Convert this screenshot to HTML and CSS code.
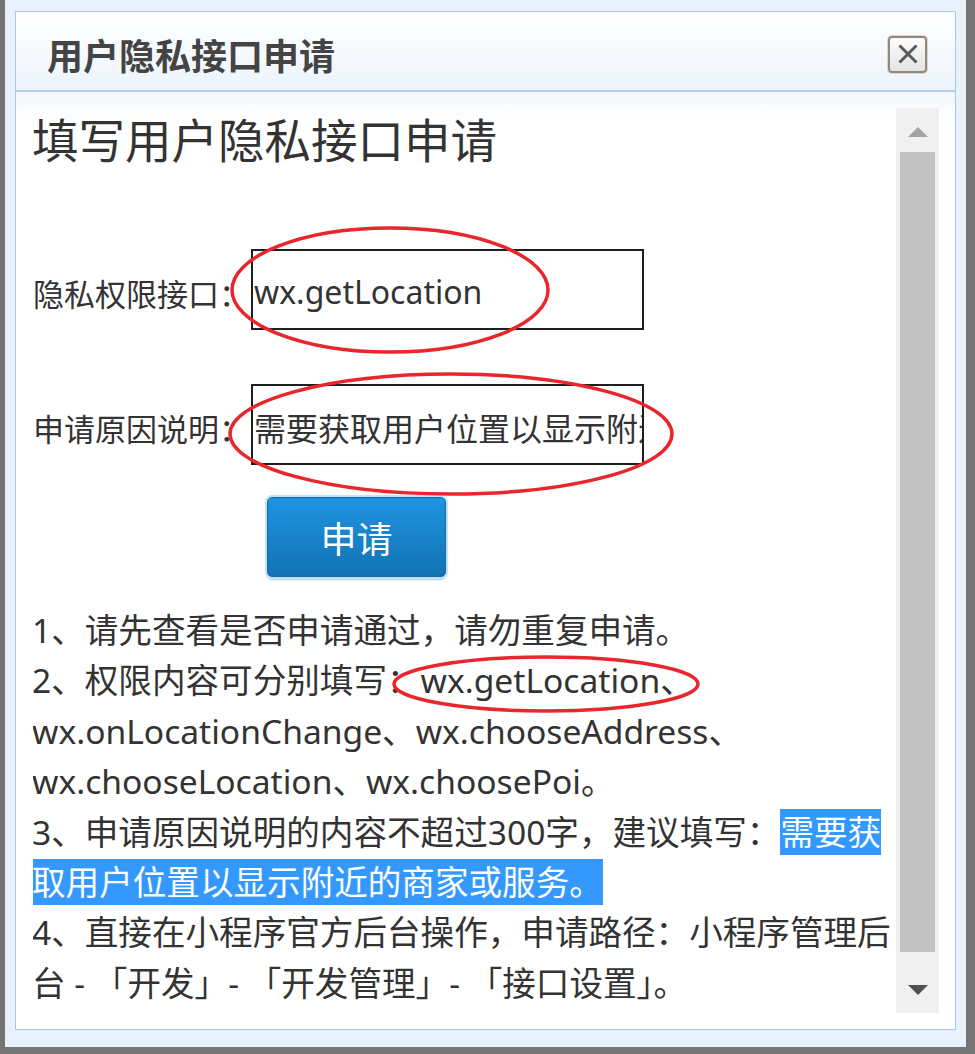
FILE: index.html
```html
<!DOCTYPE html>
<html lang="zh-CN">
<head>
  <meta charset="UTF-8" />
  <meta name="viewport" content="width=device-width, initial-scale=1.0"/>
  <title>用户隐私接口申请</title>
  <link rel="stylesheet" href="styles.css">
</head>
<body>

  <div class="window">
    <div class="dialog">
      <div class="dialog-title">
        <span class="title-text">用户隐私接口申请</span>
        <button class="close-btn" title="关闭">
          <svg width="22" height="22" viewBox="0 0 22 22">
            <path d="M2.5 2.5 L19.5 19.5 M19.5 2.5 L2.5 19.5" stroke="#5a5a5a" stroke-width="3" fill="none"/>
          </svg>
        </button>
      </div>

      <div class="dialog-body">
        <div class="content">
          <div class="heading">填写用户隐私接口申请</div>

          <div class="form-row">
            <label class="form-label" for="apiName">隐私权限接口：</label>
            <input class="form-input" id="apiName" type="text" value="wx.getLocation">
          </div>

          <div class="form-row">
            <label class="form-label" for="reason">申请原因说明：</label>
            <input class="form-input" id="reason" type="text" value="需要获取用户位置以显示附近的商家或服务。">
          </div>

          <button class="apply-btn">申请</button>

          <div class="notes">
            <p>1、请先查看是否申请通过，请勿重复申请。</p>
            <p>2、权限内容可分别填写：wx.getLocation、wx.onLocationChange、wx.chooseAddress、wx.chooseLocation、wx.choosePoi。</p>
            <p>3、申请原因说明的内容不超过300字，建议填写：<span class="hl">需要获取用户位置以显示附近的商家或服务。</span></p>
            <p>4、直接在小程序官方后台操作，申请路径：小程序管理后台 - 「开发」- 「开发管理」- 「接口设置」。</p>
          </div>
        </div>

        <div class="scrollbar">
          <div class="scroll-up"><span class="arrow-up"></span></div>
          <div class="scroll-thumb"></div>
          <div class="scroll-down"><span class="arrow-down"></span></div>
        </div>
      </div>
    </div>
  </div>

  <!-- red marks drawn over the screenshot -->
  <svg class="marks" width="975" height="1054" viewBox="0 0 975 1054">
    <ellipse cx="390" cy="290" rx="158" ry="62" />
    <ellipse cx="451" cy="434" rx="221" ry="60" />
    <ellipse cx="546" cy="684" rx="152" ry="27" />
  </svg>

</body>
</html>
```

FILE: styles.css
```css
* {
  box-sizing: border-box;
}

body {
  margin: 0;
  width: 975px;
  height: 1054px;
  background: #747474;
  font-family: "Noto Sans", "Noto Sans CJK SC", sans-serif;
  color: #333;
  position: relative;
  overflow: hidden;
}

.window {
  margin-left: 5px;
  width: 961px;
  height: 1047px;
  background: #e8f2fc;
  padding: 11px 10px 0 10px;
}

.dialog {
  height: 1019px;
  border: 1px solid #a7c7e4;
  background: #fff;
  display: flex;
  flex-direction: column;
}

.dialog-title {
  height: 80px;
  border-bottom: 2px solid #b5d1ea;
  background: linear-gradient(#ffffff, #edf4fc);
  display: flex;
  align-items: center;
  justify-content: space-between;
  padding: 0 28px 0 31px;
}

.title-text {
  margin-top: 12px;
  font-size: 36px;
  line-height: 40px;
  font-weight: bold;
  color: #444;
}

.close-btn {
  margin-top: 6px;
  width: 39px;
  height: 37px;
  padding: 0;
  border: 2px solid #8a8a8a;
  border-radius: 4px;
  background: linear-gradient(#fdfdfd, #e4e4e4);
  box-shadow: 0 0 0 1px #ead3b9;
  display: flex;
  align-items: center;
  justify-content: center;
  cursor: pointer;
}

.dialog-body {
  flex: 1;
  display: flex;
  padding: 16px 16px 16px 17px;
  background: linear-gradient(#f3f7fc, #ffffff 30px);
}

.content {
  flex: 1;
  overflow: hidden;
}

.heading {
  margin-top: 2px;
  margin-left: -1px;
  font-size: 46.5px;
  line-height: 60px;
}

.form-row {
  display: flex;
  align-items: center;
  margin-top: 79px;
}

.form-row + .form-row {
  margin-top: 54px;
}

.form-label {
  width: 218px;
  padding-top: 6px;
  font-size: 31px;
  white-space: nowrap;
}

.form-input {
  width: 393px;
  height: 81px;
  border: 2px solid #1f1f1f;
  padding: 4px 0 0 1px;
  font-family: inherit;
  font-size: 32px;
  color: #333;
  background: #fff;
  outline: none;
}

.apply-btn {
  display: block;
  margin: 32px 0 0 234px;
  width: 179px;
  height: 80px;
  border: 1px solid #0e6cab;
  border-radius: 5px;
  background: linear-gradient(#1f94e1, #1273b4);
  box-shadow: 0 0 0 2px #c5e2f8, 0 3px 2px #a9d3f3;
  color: #fff;
  font-family: inherit;
  font-size: 36px;
  cursor: pointer;
}

.notes {
  margin-top: 28px;
  margin-left: -1px;
  font-size: 33.6px;
  line-height: 50.4px;
}

.notes p {
  margin: 0;
}

.hl {
  background: #3399ff;
  color: #fff;
}

.scrollbar {
  width: 43px;
  background: #f0f0f0;
  display: flex;
  flex-direction: column;
}

.scroll-up {
  height: 44px;
  padding-top: 4px;
  display: flex;
  align-items: center;
  justify-content: center;
}

.arrow-up {
  border-left: 10px solid transparent;
  border-right: 10px solid transparent;
  border-bottom: 10px solid #a3a3a3;
}

.scroll-thumb {
  height: 800px;
  margin: 0 4px;
  background: #c1c1c1;
}

.scroll-down {
  flex: 1;
  padding-bottom: 18px;
  display: flex;
  align-items: flex-end;
  justify-content: center;
}

.arrow-down {
  border-left: 10px solid transparent;
  border-right: 10px solid transparent;
  border-top: 10px solid #505050;
}

.marks {
  position: absolute;
  left: 0;
  top: 0;
  pointer-events: none;
}

.marks ellipse {
  fill: none;
  stroke: #e8262b;
  stroke-width: 3.5;
}
```
